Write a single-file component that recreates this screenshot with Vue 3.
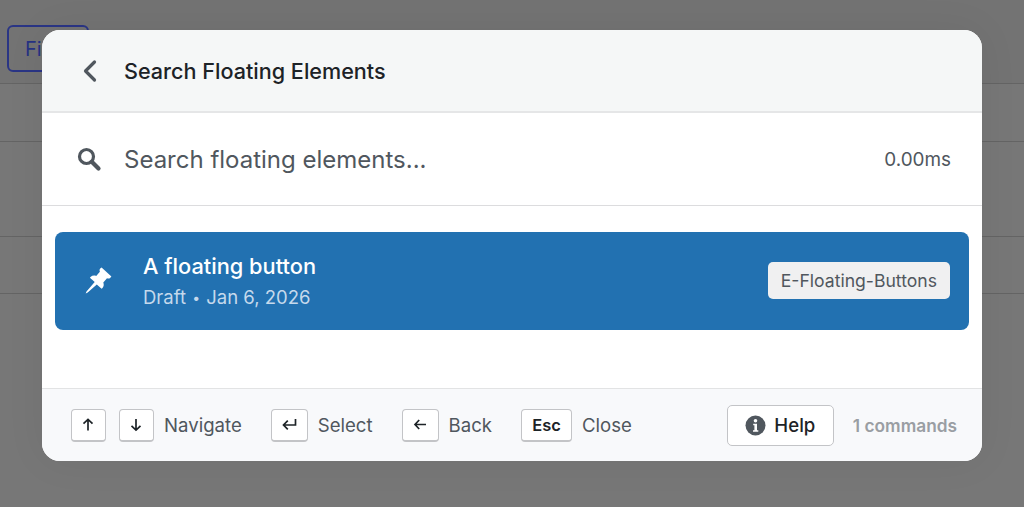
<script setup>
const hints = [
  { keys: ['up', 'down'], label: 'Navigate' },
  { keys: ['enter'], label: 'Select' },
  { keys: ['left'], label: 'Back' },
  { keys: ['esc'], label: 'Close' }
]

const arrows = {
  up: 'M8 14V3M3.5 7.2 8 3l4.5 4.2',
  down: 'M8 2.5v11M3.5 9.3 8 13.5l4.5-4.2',
  left: 'M14 8H3M7.2 3.5 3 8l4.2 4.5',
  enter: 'M14.5 2.5v6H2.5M6.8 4.2 2.5 8.5l4.3 4.3'
}
</script>

<template>
  <div class="page">
    <div class="behind">
      <div class="toolbar"><button class="filter">Filter</button></div>
      <div class="row" style="height: 58px"></div>
      <div class="row" style="height: 95px"></div>
      <div class="row" style="height: 57px"></div>
    </div>

    <div class="modal">
      <header class="head">
        <svg class="back" width="16" height="24" viewBox="0 0 16 24" fill="none">
          <path d="M13.5 3 4.5 12l9 9" stroke="#50575e" stroke-width="3.2" stroke-linecap="round" stroke-linejoin="round" />
        </svg>
        <h2>Search Floating Elements</h2>
      </header>

      <div class="search">
        <svg class="lens" width="26" height="26" viewBox="0 0 26 26" fill="none">
          <circle cx="10.5" cy="10.5" r="7" stroke="#50575e" stroke-width="3.2" />
          <path d="M16 16l6.5 6.5" stroke="#50575e" stroke-width="4.2" stroke-linecap="round" />
        </svg>
        <span class="placeholder">Search floating elements...</span>
        <span class="time">0.00ms</span>
      </div>

      <div class="list">
        <div class="item">
          <svg class="pin" width="30" height="30" viewBox="0 0 30 30">
            <path fill="#fff" d="M18.6 1.5 28.4 10.5l-1.3 1.5c-.9.8-2.1.7-3.1.2l-3.7 4.2c.8 2.2.5 4-.8 5.5l-.9.9-4.8-4.4-9.1 8.1-2 .9.8-2 8.2-9.3-4.8-4.4.9-.9c1.4-1.3 3.3-1.6 5.4-.9l3.7-4.2c-.5-1.1-.5-2.3.3-3.2z" />
          </svg>
          <div class="info">
            <div class="title">A floating button</div>
            <div class="meta">Draft <span class="dot">•</span> Jan 6, 2026</div>
          </div>
          <span class="tag">E-Floating-Buttons</span>
        </div>
      </div>

      <footer class="foot">
        <div class="hint" v-for="hint in hints" :key="hint.label">
          <kbd v-for="key in hint.keys" :key="key" :class="['key', 'key-' + key]">
            <template v-if="key === 'esc'">Esc</template>
            <svg v-else width="17" height="17" viewBox="0 0 17 16" fill="none">
              <path :d="arrows[key]" stroke="#1d2327" stroke-width="1.7" />
            </svg>
          </kbd>
          <span class="hint-label">{{ hint.label }}</span>
        </div>

        <button class="help">
          <svg width="21" height="21" viewBox="0 0 21 21">
            <circle cx="10.5" cy="10.5" r="10" fill="#50575e" />
            <circle cx="10.5" cy="5.8" r="1.8" fill="#fff" />
            <path d="M8.2 8.8h3.8v6.4h1.3v1.5H8v-1.5h1.4v-4.9H8.2z" fill="#fff" />
          </svg>
          Help
        </button>
        <span class="count">1 commands</span>
      </footer>
    </div>
  </div>
</template>

<style>
html, body {
  margin: 0;
  background: #777;
  overflow: hidden;
}
</style>

<style scoped>
.page {
  position: relative;
  width: 1024px;
  height: 507px;
  overflow: hidden;
  background: #777;
  font-family: Inter, "Liberation Sans", sans-serif;
}

.toolbar {
  height: 84px;
  padding: 25px 7px 0;
  box-sizing: border-box;
  border-bottom: 1px solid #646464;
  background: #737373;
}

.filter {
  width: 82px;
  height: 47px;
  padding: 0 16px;
  text-align: left;
  background: transparent;
  border: 2px solid #2a3585;
  border-radius: 6px;
  color: #263283;
  font: 400 20px Inter, sans-serif;
}

.row {
  box-sizing: border-box;
  border-bottom: 1px solid #646464;
}

.modal {
  position: absolute;
  left: 42px;
  top: 30px;
  width: 940px;
  height: 431px;
  display: flex;
  flex-direction: column;
  border-radius: 18px;
  overflow: hidden;
  background: #fff;
  box-shadow: 0 0 40px rgba(0, 0, 0, 0.06);
}

.head {
  height: 83px;
  box-sizing: border-box;
  flex: none;
  display: flex;
  align-items: center;
  padding-left: 39px;
  background: #f5f7f7;
  border-bottom: 2px solid #e5e6e7;
}

.back {
  margin-right: 27px;
}

h2 {
  margin: 0;
  font-size: 21.6px;
  font-weight: 500;
  color: #1d2327;
}

.search {
  height: 93px;
  box-sizing: border-box;
  flex: none;
  display: flex;
  align-items: center;
  padding: 0 31px 0 34px;
  border-bottom: 1px solid #dcdcde;
}

.lens {
  margin-right: 22px;
}

.placeholder {
  flex: 1;
  font-size: 24px;
  color: #50575e;
}

.time {
  font-size: 18.9px;
  color: #50575e;
}

.list {
  flex: 1;
  padding: 26px 13px 0;
}

.item {
  height: 98px;
  display: flex;
  align-items: center;
  padding: 0 19px 0 28px;
  background: #2271b1;
  border-radius: 8px;
}

.pin {
  margin-right: 30px;
}

.info {
  flex: 1;
}

.title {
  font-size: 21.8px;
  font-weight: 500;
  color: #fff;
  margin-bottom: 7px;
  margin-top: -2px;
}

.meta {
  font-size: 18.5px;
  color: #c5d9ec;
}

.dot {
  font-size: 14px;
  margin: 0 1px;
  vertical-align: 1px;
}

.tag {
  margin-top: -1px;
  padding: 8px 13px;
  font-size: 17.6px;
  line-height: 21px;
  color: #50575e;
  background: #f0f0f1;
  border-radius: 5px;
}

.foot {
  height: 73px;
  flex: none;
  display: flex;
  align-items: center;
  padding: 0 25px 0 29px;
  background: #f8f9fb;
  border-top: 1px solid #e2e3e4;
  box-sizing: border-box;
}

.hint {
  display: flex;
  align-items: center;
  gap: 13px;
  margin-right: 29px;
}

.hint-label {
  font-size: 18.6px;
  color: #50575e;
  margin-left: -3px;
}

.key {
  width: 35px;
  height: 33px;
  box-sizing: border-box;
  display: flex;
  align-items: center;
  justify-content: center;
  background: #fff;
  border: 1px solid #c3c4c7;
  border-bottom-width: 2px;
  border-radius: 4px;
  font: 600 16.5px Inter, sans-serif;
  color: #1d2327;
}

.key-enter,
.key-left {
  width: 37px;
}

.key-esc {
  width: 51px;
}

.help {
  margin-left: auto;
  width: 107px;
  height: 41px;
  display: flex;
  align-items: center;
  justify-content: center;
  gap: 8px;
  background: #fff;
  border: 1px solid #c3c4c7;
  border-radius: 5px;
  font: 500 18.6px Inter, sans-serif;
  color: #1d2327;
}

.count {
  margin-left: 19px;
  font-size: 17.3px;
  font-weight: 600;
  color: #9a9ea3;
}
</style>
